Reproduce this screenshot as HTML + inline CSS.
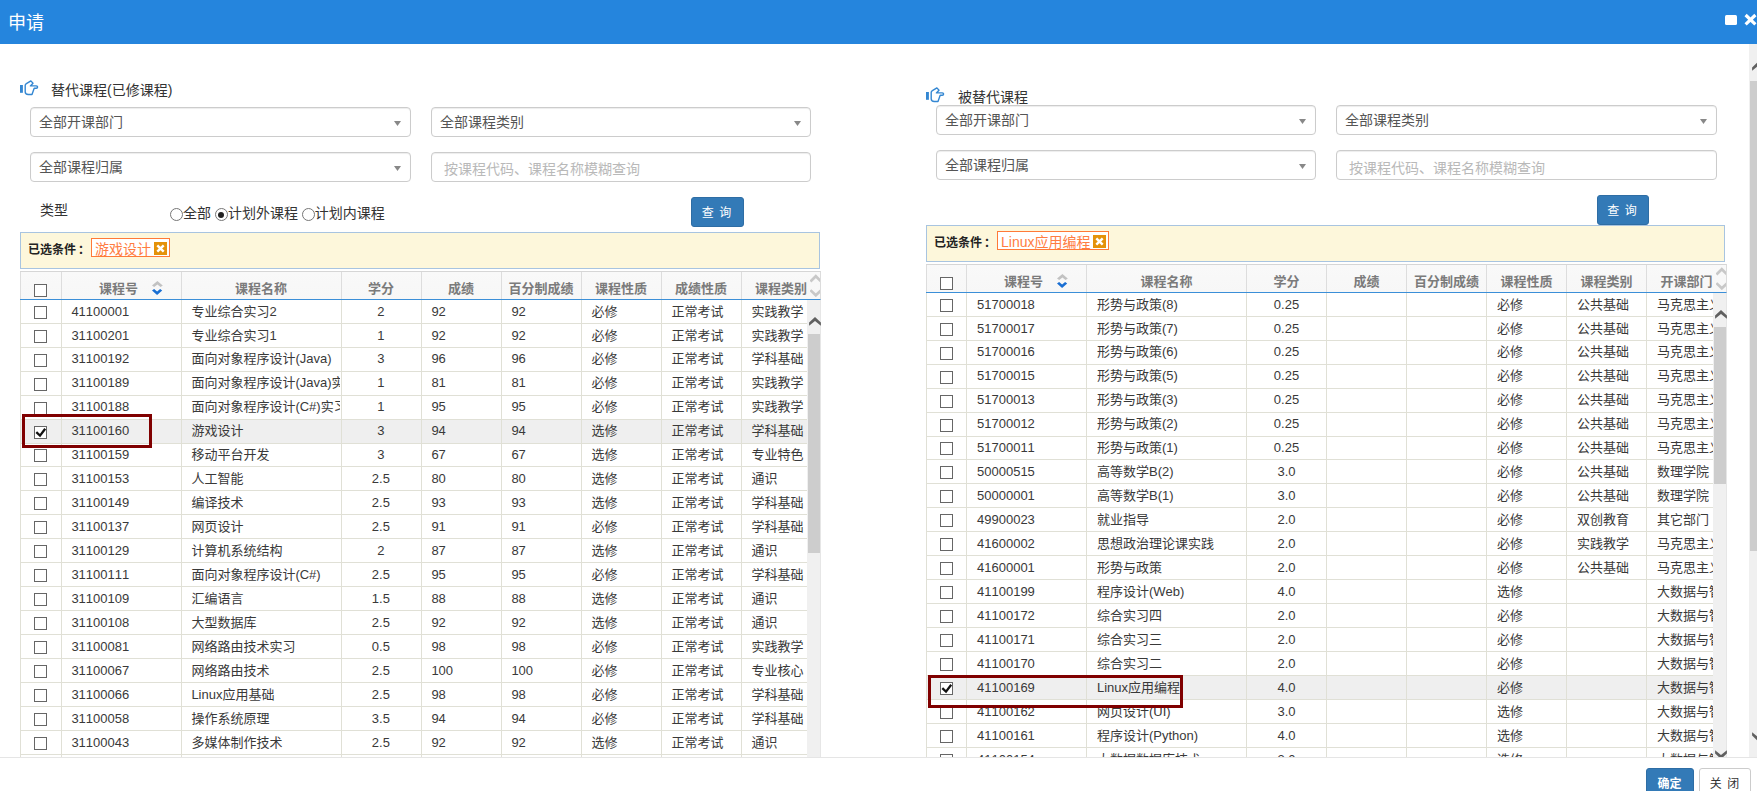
<!DOCTYPE html>
<html lang="zh-CN"><head><meta charset="utf-8"><title>申请</title>
<style>
*{box-sizing:border-box}
html,body{margin:0;padding:0}
body{width:1757px;height:791px;overflow:hidden;position:relative;background:#fff;
 font-family:"Liberation Sans","Noto Sans CJK SC",sans-serif;font-size:14px;color:#333;font-kerning:none}
.abs{position:absolute}
#titlebar{position:absolute;left:0;top:0;width:1757px;height:44px;background:#2585dd;color:#fff}
#titlebar h4{margin:0;position:absolute;left:8px;top:10px;font-size:18px;line-height:26px;font-weight:400}
#winmax{position:absolute;left:1725.4px;top:15px;width:11.2px;height:10px;background:#fff;border-radius:1.5px}
#winclose{position:absolute;left:1743px;top:12px;width:15px;height:15px}
.hand{position:absolute;width:19px;height:16px;overflow:visible}
.ptitle{position:absolute;font-size:14px;line-height:20px;color:#333;white-space:nowrap}
.sel{position:absolute;height:30px;border:1px solid #ccc;border-radius:4px;background:#fff;
 box-shadow:inset 0 1px 1px rgba(0,0,0,.075);color:#555;font-size:14px;line-height:28px;padding-left:8px;white-space:nowrap}
.sel .caret{position:absolute;right:9px;top:13px;width:7px;height:5px}
.inp{color:#b9b9b9;padding-left:12px;line-height:32px}
.inp.lo{line-height:34px}
.lbl{position:absolute;font-size:14px;line-height:20px;color:#333}
.radios{position:absolute;font-size:14px;line-height:20px;color:#333;white-space:nowrap}
.rd{display:inline-block;width:13px;height:13px;border:1px solid #767676;border-radius:50%;background:#fff;vertical-align:-3px;position:relative}
.rd.on::after{content:"";position:absolute;left:2.5px;top:2.5px;width:6px;height:6px;border-radius:50%;background:#222}
.btn{position:absolute;border-radius:3px;font-size:12px;text-align:center;white-space:nowrap}
.btn-primary{background:#337ab7;border:1px solid #2e6da4;color:#fff}
.btn-default{background:#fff;border:1px solid #ccc;color:#333}
.cond{position:absolute;height:37px;width:800px;background:#fdf7db;border:1px solid #a8c4e0}
.cond b{position:absolute;left:7px;top:8.5px;font-size:12px;line-height:16px;color:#222;font-weight:700;white-space:nowrap}
.tag{position:absolute;height:19px;border:1px solid #ff7a38;background:#fff;color:#ff7d42;font-size:14px;line-height:19px;padding-left:3px;white-space:nowrap}
.tag .tx{position:absolute;right:2px;top:3px;width:13px;height:13px}
.tag span{position:relative;top:1px}
.grid{position:absolute;overflow:hidden}
.ghdr{position:absolute;left:0;top:0;height:29px;border-top:1px solid #d6d6d6;border-bottom:1px solid #3b8fd8;border-right:1px solid #dcdcdc;
 background:linear-gradient(#f9f9f9,#f7f7f7);overflow:hidden}
.th{position:absolute;top:0;height:27px;line-height:33px;text-align:center;font-size:13px;font-weight:700;color:#7b7b7b;white-space:nowrap;overflow:hidden}
.sorttxt{position:relative;left:-3px}
.sico{position:absolute;left:90px;top:9px;width:11px;height:15px}
.hspin{position:absolute;right:0;width:10px;height:24px;top:0.5px}
.vh{position:absolute;top:0;width:1px;height:27px;background:#dddddd}
.gbody{position:absolute;left:0;overflow:hidden;background:#fff}
.row{position:absolute;left:0;width:805px;height:24px;border-bottom:1px solid #e0e0d6}
.row.hl{background:#efefef}
.td{position:absolute;top:-0.2px;height:23px;line-height:23px;font-size:13px;color:#393939;padding-left:10px;white-space:nowrap;overflow:hidden}
.td.c{text-align:center;padding-left:0}
.vb{position:absolute;top:0;width:1px;height:100%;background:#e0e0d6}
.cb{position:absolute;top:6px;width:13px;height:13px;border:1px solid #666;background:#fff}
.hcb{top:12px}
.cb .ck{position:absolute;left:-1px;top:-1px;width:13px;height:13px}
.mark{position:absolute;border:3px solid #800000}
.sbar{position:absolute;background:#f0f0f0;overflow:hidden}
.sbar .edge{position:absolute;top:0;width:1px;height:100%;background:#e6e6e6}
.sbar .thumb{position:absolute;background:#cdcdcd}
.sbar svg{position:absolute}
#footline{position:absolute;left:0;top:757px;width:1757px;height:1px;background:#e5e5e5}
#footer{position:absolute;left:0;top:758px;width:1757px;height:33px;background:#fff}
</style></head><body>

<div id="titlebar"><h4>申请</h4><span id="winmax"></span><svg id="winclose" viewBox="0 0 15 15"><path d="M2.6 3 L12.4 12.4 M12.4 3 L2.6 12.4" stroke="#fff" stroke-width="3.2" stroke-linecap="butt"/></svg></div>
<section id="left">
<svg class="hand" style="left:20px;top:80px" viewBox="0 0 19 16"><rect x="0" y="5" width="2.9" height="7.8" fill="#3487d2"/><path d="M10.9 0.9 L13 3.2 L10.4 5.9 H16.3 Q17.6 5.9 17.6 7.05 Q17.6 8.2 16.3 8.2 H14.2 L12 14.5 H8.2 Q5.2 14.5 5.2 11.8 V5.6 Q5.2 4.4 6.4 3.7 Z" fill="none" stroke="#3487d2" stroke-width="1.4" stroke-linejoin="round"/></svg>
<div class="ptitle" style="left:51px;top:80px">替代课程(已修课程)</div>
<div class="sel" style="left:30px;top:107px;width:381px"><span>全部开课部门</span><svg class="caret" viewBox="0 0 7 5"><path d="M0 0 H7 L3.5 5 Z" fill="#888"/></svg></div>
<div class="sel" style="left:431px;top:107px;width:380px"><span>全部课程类别</span><svg class="caret" viewBox="0 0 7 5"><path d="M0 0 H7 L3.5 5 Z" fill="#888"/></svg></div>
<div class="sel" style="left:30px;top:152px;width:381px"><span>全部课程归属</span><svg class="caret" viewBox="0 0 7 5"><path d="M0 0 H7 L3.5 5 Z" fill="#888"/></svg></div>
<div class="sel inp" style="left:431px;top:152px;width:380px"><span>按课程代码、课程名称模糊查询</span></div>
<div class="lbl" style="left:40px;top:200px">类型</div>
<div class="radios" style="left:170px;top:203px"><i class="rd"></i>全部 <i class="rd on"></i>计划外课程 <i class="rd"></i>计划内课程</div>
<div class="btn btn-primary" style="left:691px;top:197px;width:53px;height:30px;line-height:31px;word-spacing:2px;text-indent:-2px">查 询</div>
<div class="cond" style="left:20px;top:232px"><b>已选条件<span style="margin-left:2px">：</span></b></div>
<div class="tag" style="left:91px;top:238px;width:79px"><span>游戏设计</span><svg class="tx" viewBox="0 0 13 13"><rect width="13" height="13" fill="#e4920a"/><path d="M3.3 3.3 L9.7 9.7 M9.7 3.3 L3.3 9.7" stroke="#fff" stroke-width="2.4"/></svg></div>
<div class="grid" id="lgrid" style="left:20px;top:271px;width:802px;height:486px">
<div class="ghdr" style="width:801px">
<span class="cb hcb" style="left:14px"></span>
<div class="th" style="left:42px;width:119px"><span class="sorttxt">课程号</span><svg class="sico" viewBox="0 0 11 15"><polygon points="5.4,0 10.8,4.55 8.6,6 5.4,3.5 2.2,6 0,4.55" fill="#c2c2c2"/><polygon points="0,9.4 2.1,7.9 5.1,10.4 8.1,7.9 10.2,9.4 5.1,14.1" fill="#1a6fd3"/></svg></div>
<div class="th" style="left:161.4px;width:159px">课程名称</div>
<div class="th" style="left:321.4px;width:79px">学分</div>
<div class="th" style="left:401.4px;width:79px">成绩</div>
<div class="th" style="left:481.4px;width:79px">百分制成绩</div>
<div class="th" style="left:561.4px;width:79px">课程性质</div>
<div class="th" style="left:641.4px;width:79px">成绩性质</div>
<div class="th" style="left:721.4px;width:79px">课程类别</div>
<i class="vh" style="left:0px"></i>
<i class="vh" style="left:41px"></i>
<i class="vh" style="left:161px"></i>
<i class="vh" style="left:321px"></i>
<i class="vh" style="left:401px"></i>
<i class="vh" style="left:481px"></i>
<i class="vh" style="left:561px"></i>
<i class="vh" style="left:641px"></i>
<i class="vh" style="left:721px"></i>
<svg class="hspin" viewBox="0 0 10 24"><path d="M0.4 8.5 L5.8 3.2 L11 8.3" fill="none" stroke="#c8c8c8" stroke-width="2.7"/><path d="M0.4 17.1 L5.8 22.3 L11 17.3" fill="none" stroke="#c8c8c8" stroke-width="2.7"/></svg>
</div>
<div class="gbody" style="top:29px;width:787px;height:457px">
<div class="row" style="top:-0.23px">
<span class="cb" style="left:14px"></span>
<div class="td" style="left:41.4px;width:119px">41100001</div>
<div class="td" style="left:161.4px;width:159px">专业综合实习2</div>
<div class="td c" style="left:321.4px;width:79px">2</div>
<div class="td" style="left:401.4px;width:79px">92</div>
<div class="td" style="left:481.4px;width:79px">92</div>
<div class="td" style="left:561.4px;width:79px">必修</div>
<div class="td" style="left:641.4px;width:79px">正常考试</div>
<div class="td" style="left:721.4px;width:79px">实践教学</div>
</div>
<div class="row" style="top:23.72px">
<span class="cb" style="left:14px"></span>
<div class="td" style="left:41.4px;width:119px">31100201</div>
<div class="td" style="left:161.4px;width:159px">专业综合实习1</div>
<div class="td c" style="left:321.4px;width:79px">1</div>
<div class="td" style="left:401.4px;width:79px">92</div>
<div class="td" style="left:481.4px;width:79px">92</div>
<div class="td" style="left:561.4px;width:79px">必修</div>
<div class="td" style="left:641.4px;width:79px">正常考试</div>
<div class="td" style="left:721.4px;width:79px">实践教学</div>
</div>
<div class="row" style="top:47.67px">
<span class="cb" style="left:14px"></span>
<div class="td" style="left:41.4px;width:119px">31100192</div>
<div class="td" style="left:161.4px;width:159px">面向对象程序设计(Java)</div>
<div class="td c" style="left:321.4px;width:79px">3</div>
<div class="td" style="left:401.4px;width:79px">96</div>
<div class="td" style="left:481.4px;width:79px">96</div>
<div class="td" style="left:561.4px;width:79px">必修</div>
<div class="td" style="left:641.4px;width:79px">正常考试</div>
<div class="td" style="left:721.4px;width:79px">学科基础</div>
</div>
<div class="row" style="top:71.62px">
<span class="cb" style="left:14px"></span>
<div class="td" style="left:41.4px;width:119px">31100189</div>
<div class="td" style="left:161.4px;width:159px">面向对象程序设计(Java)实习</div>
<div class="td c" style="left:321.4px;width:79px">1</div>
<div class="td" style="left:401.4px;width:79px">81</div>
<div class="td" style="left:481.4px;width:79px">81</div>
<div class="td" style="left:561.4px;width:79px">必修</div>
<div class="td" style="left:641.4px;width:79px">正常考试</div>
<div class="td" style="left:721.4px;width:79px">实践教学</div>
</div>
<div class="row" style="top:95.57px">
<span class="cb" style="left:14px"></span>
<div class="td" style="left:41.4px;width:119px">31100188</div>
<div class="td" style="left:161.4px;width:159px">面向对象程序设计(C#)实习</div>
<div class="td c" style="left:321.4px;width:79px">1</div>
<div class="td" style="left:401.4px;width:79px">95</div>
<div class="td" style="left:481.4px;width:79px">95</div>
<div class="td" style="left:561.4px;width:79px">必修</div>
<div class="td" style="left:641.4px;width:79px">正常考试</div>
<div class="td" style="left:721.4px;width:79px">实践教学</div>
</div>
<div class="row hl" style="top:119.52px">
<span class="cb on" style="left:14px"><svg class="ck" viewBox="0 0 13 13"><path d="M2.3 6.2 L6 9.6 L11.2 2.7" fill="none" stroke="#111" stroke-width="2.3"/></svg></span>
<div class="td" style="left:41.4px;width:119px">31100160</div>
<div class="td" style="left:161.4px;width:159px">游戏设计</div>
<div class="td c" style="left:321.4px;width:79px">3</div>
<div class="td" style="left:401.4px;width:79px">94</div>
<div class="td" style="left:481.4px;width:79px">94</div>
<div class="td" style="left:561.4px;width:79px">选修</div>
<div class="td" style="left:641.4px;width:79px">正常考试</div>
<div class="td" style="left:721.4px;width:79px">学科基础</div>
</div>
<div class="row" style="top:143.47px">
<span class="cb" style="left:14px"></span>
<div class="td" style="left:41.4px;width:119px">31100159</div>
<div class="td" style="left:161.4px;width:159px">移动平台开发</div>
<div class="td c" style="left:321.4px;width:79px">3</div>
<div class="td" style="left:401.4px;width:79px">67</div>
<div class="td" style="left:481.4px;width:79px">67</div>
<div class="td" style="left:561.4px;width:79px">选修</div>
<div class="td" style="left:641.4px;width:79px">正常考试</div>
<div class="td" style="left:721.4px;width:79px">专业特色</div>
</div>
<div class="row" style="top:167.42px">
<span class="cb" style="left:14px"></span>
<div class="td" style="left:41.4px;width:119px">31100153</div>
<div class="td" style="left:161.4px;width:159px">人工智能</div>
<div class="td c" style="left:321.4px;width:79px">2.5</div>
<div class="td" style="left:401.4px;width:79px">80</div>
<div class="td" style="left:481.4px;width:79px">80</div>
<div class="td" style="left:561.4px;width:79px">选修</div>
<div class="td" style="left:641.4px;width:79px">正常考试</div>
<div class="td" style="left:721.4px;width:79px">通识</div>
</div>
<div class="row" style="top:191.37px">
<span class="cb" style="left:14px"></span>
<div class="td" style="left:41.4px;width:119px">31100149</div>
<div class="td" style="left:161.4px;width:159px">编译技术</div>
<div class="td c" style="left:321.4px;width:79px">2.5</div>
<div class="td" style="left:401.4px;width:79px">93</div>
<div class="td" style="left:481.4px;width:79px">93</div>
<div class="td" style="left:561.4px;width:79px">选修</div>
<div class="td" style="left:641.4px;width:79px">正常考试</div>
<div class="td" style="left:721.4px;width:79px">学科基础</div>
</div>
<div class="row" style="top:215.32px">
<span class="cb" style="left:14px"></span>
<div class="td" style="left:41.4px;width:119px">31100137</div>
<div class="td" style="left:161.4px;width:159px">网页设计</div>
<div class="td c" style="left:321.4px;width:79px">2.5</div>
<div class="td" style="left:401.4px;width:79px">91</div>
<div class="td" style="left:481.4px;width:79px">91</div>
<div class="td" style="left:561.4px;width:79px">必修</div>
<div class="td" style="left:641.4px;width:79px">正常考试</div>
<div class="td" style="left:721.4px;width:79px">学科基础</div>
</div>
<div class="row" style="top:239.27px">
<span class="cb" style="left:14px"></span>
<div class="td" style="left:41.4px;width:119px">31100129</div>
<div class="td" style="left:161.4px;width:159px">计算机系统结构</div>
<div class="td c" style="left:321.4px;width:79px">2</div>
<div class="td" style="left:401.4px;width:79px">87</div>
<div class="td" style="left:481.4px;width:79px">87</div>
<div class="td" style="left:561.4px;width:79px">选修</div>
<div class="td" style="left:641.4px;width:79px">正常考试</div>
<div class="td" style="left:721.4px;width:79px">通识</div>
</div>
<div class="row" style="top:263.22px">
<span class="cb" style="left:14px"></span>
<div class="td" style="left:41.4px;width:119px">31100111</div>
<div class="td" style="left:161.4px;width:159px">面向对象程序设计(C#)</div>
<div class="td c" style="left:321.4px;width:79px">2.5</div>
<div class="td" style="left:401.4px;width:79px">95</div>
<div class="td" style="left:481.4px;width:79px">95</div>
<div class="td" style="left:561.4px;width:79px">必修</div>
<div class="td" style="left:641.4px;width:79px">正常考试</div>
<div class="td" style="left:721.4px;width:79px">学科基础</div>
</div>
<div class="row" style="top:287.17px">
<span class="cb" style="left:14px"></span>
<div class="td" style="left:41.4px;width:119px">31100109</div>
<div class="td" style="left:161.4px;width:159px">汇编语言</div>
<div class="td c" style="left:321.4px;width:79px">1.5</div>
<div class="td" style="left:401.4px;width:79px">88</div>
<div class="td" style="left:481.4px;width:79px">88</div>
<div class="td" style="left:561.4px;width:79px">选修</div>
<div class="td" style="left:641.4px;width:79px">正常考试</div>
<div class="td" style="left:721.4px;width:79px">通识</div>
</div>
<div class="row" style="top:311.12px">
<span class="cb" style="left:14px"></span>
<div class="td" style="left:41.4px;width:119px">31100108</div>
<div class="td" style="left:161.4px;width:159px">大型数据库</div>
<div class="td c" style="left:321.4px;width:79px">2.5</div>
<div class="td" style="left:401.4px;width:79px">92</div>
<div class="td" style="left:481.4px;width:79px">92</div>
<div class="td" style="left:561.4px;width:79px">选修</div>
<div class="td" style="left:641.4px;width:79px">正常考试</div>
<div class="td" style="left:721.4px;width:79px">通识</div>
</div>
<div class="row" style="top:335.07px">
<span class="cb" style="left:14px"></span>
<div class="td" style="left:41.4px;width:119px">31100081</div>
<div class="td" style="left:161.4px;width:159px">网络路由技术实习</div>
<div class="td c" style="left:321.4px;width:79px">0.5</div>
<div class="td" style="left:401.4px;width:79px">98</div>
<div class="td" style="left:481.4px;width:79px">98</div>
<div class="td" style="left:561.4px;width:79px">必修</div>
<div class="td" style="left:641.4px;width:79px">正常考试</div>
<div class="td" style="left:721.4px;width:79px">实践教学</div>
</div>
<div class="row" style="top:359.02px">
<span class="cb" style="left:14px"></span>
<div class="td" style="left:41.4px;width:119px">31100067</div>
<div class="td" style="left:161.4px;width:159px">网络路由技术</div>
<div class="td c" style="left:321.4px;width:79px">2.5</div>
<div class="td" style="left:401.4px;width:79px">100</div>
<div class="td" style="left:481.4px;width:79px">100</div>
<div class="td" style="left:561.4px;width:79px">必修</div>
<div class="td" style="left:641.4px;width:79px">正常考试</div>
<div class="td" style="left:721.4px;width:79px">专业核心</div>
</div>
<div class="row" style="top:382.97px">
<span class="cb" style="left:14px"></span>
<div class="td" style="left:41.4px;width:119px">31100066</div>
<div class="td" style="left:161.4px;width:159px">Linux应用基础</div>
<div class="td c" style="left:321.4px;width:79px">2.5</div>
<div class="td" style="left:401.4px;width:79px">98</div>
<div class="td" style="left:481.4px;width:79px">98</div>
<div class="td" style="left:561.4px;width:79px">必修</div>
<div class="td" style="left:641.4px;width:79px">正常考试</div>
<div class="td" style="left:721.4px;width:79px">学科基础</div>
</div>
<div class="row" style="top:406.92px">
<span class="cb" style="left:14px"></span>
<div class="td" style="left:41.4px;width:119px">31100058</div>
<div class="td" style="left:161.4px;width:159px">操作系统原理</div>
<div class="td c" style="left:321.4px;width:79px">3.5</div>
<div class="td" style="left:401.4px;width:79px">94</div>
<div class="td" style="left:481.4px;width:79px">94</div>
<div class="td" style="left:561.4px;width:79px">必修</div>
<div class="td" style="left:641.4px;width:79px">正常考试</div>
<div class="td" style="left:721.4px;width:79px">学科基础</div>
</div>
<div class="row" style="top:430.87px">
<span class="cb" style="left:14px"></span>
<div class="td" style="left:41.4px;width:119px">31100043</div>
<div class="td" style="left:161.4px;width:159px">多媒体制作技术</div>
<div class="td c" style="left:321.4px;width:79px">2.5</div>
<div class="td" style="left:401.4px;width:79px">92</div>
<div class="td" style="left:481.4px;width:79px">92</div>
<div class="td" style="left:561.4px;width:79px">选修</div>
<div class="td" style="left:641.4px;width:79px">正常考试</div>
<div class="td" style="left:721.4px;width:79px">通识</div>
</div>
<div class="row" style="top:454.82px">
<span class="cb" style="left:14px"></span>
<div class="td" style="left:41.4px;width:119px">31100042</div>
<div class="td" style="left:161.4px;width:159px">计算机网络</div>
<div class="td c" style="left:321.4px;width:79px">3</div>
<div class="td" style="left:401.4px;width:79px">90</div>
<div class="td" style="left:481.4px;width:79px">90</div>
<div class="td" style="left:561.4px;width:79px">必修</div>
<div class="td" style="left:641.4px;width:79px">正常考试</div>
<div class="td" style="left:721.4px;width:79px">学科基础</div>
</div>
<i class="vb" style="left:0px"></i>
<i class="vb" style="left:41px"></i>
<i class="vb" style="left:161px"></i>
<i class="vb" style="left:321px"></i>
<i class="vb" style="left:401px"></i>
<i class="vb" style="left:481px"></i>
<i class="vb" style="left:561px"></i>
<i class="vb" style="left:641px"></i>
<i class="vb" style="left:721px"></i>
</div>
</div>
<div class="sbar" style="left:807px;top:300px;width:14px;height:457px"><i class="edge" style="left:13px"></i><svg style="left:0px;top:0px;width:16px;height:30px" viewBox="0 0 16 30"><polygon points="8,16.9 2.1,22.6 2.1,25.8 8,21 13.9,25.8 13.9,22.6" fill="#606060"/></svg><div class="thumb" style="left:1px;top:34px;width:12px;height:219px"></div></div>
<div class="mark" style="left:22px;top:414px;width:130px;height:34px"></div>
</section>
<section id="right">
<svg class="hand" style="left:926px;top:87px" viewBox="0 0 19 16"><rect x="0" y="5" width="2.9" height="7.8" fill="#3487d2"/><path d="M10.9 0.9 L13 3.2 L10.4 5.9 H16.3 Q17.6 5.9 17.6 7.05 Q17.6 8.2 16.3 8.2 H14.2 L12 14.5 H8.2 Q5.2 14.5 5.2 11.8 V5.6 Q5.2 4.4 6.4 3.7 Z" fill="none" stroke="#3487d2" stroke-width="1.4" stroke-linejoin="round"/></svg>
<div class="ptitle" style="left:958px;top:87px">被替代课程</div>
<div class="sel" style="left:936px;top:105px;width:380px"><span>全部开课部门</span><svg class="caret" viewBox="0 0 7 5"><path d="M0 0 H7 L3.5 5 Z" fill="#888"/></svg></div>
<div class="sel" style="left:1336px;top:105px;width:381px"><span>全部课程类别</span><svg class="caret" viewBox="0 0 7 5"><path d="M0 0 H7 L3.5 5 Z" fill="#888"/></svg></div>
<div class="sel" style="left:936px;top:150px;width:380px"><span>全部课程归属</span><svg class="caret" viewBox="0 0 7 5"><path d="M0 0 H7 L3.5 5 Z" fill="#888"/></svg></div>
<div class="sel inp lo" style="left:1336px;top:150px;width:381px"><span>按课程代码、课程名称模糊查询</span></div>
<div class="btn btn-primary" style="left:1597px;top:195px;width:52px;height:30px;line-height:31px;word-spacing:2px;text-indent:-2px">查 询</div>
<div class="cond" style="left:926px;top:225px;width:799px"><b>已选条件<span style="margin-left:2px">：</span></b></div>
<div class="tag" style="left:997px;top:231px;width:112px"><span>Linux应用编程</span><svg class="tx" viewBox="0 0 13 13"><rect width="13" height="13" fill="#e4920a"/><path d="M3.3 3.3 L9.7 9.7 M9.7 3.3 L3.3 9.7" stroke="#fff" stroke-width="2.4"/></svg></div>
<div class="grid" id="rgrid" style="left:926px;top:264px;width:802px;height:493px">
<div class="ghdr" style="width:801px">
<span class="cb hcb" style="left:14px"></span>
<div class="th" style="left:41px;width:119px"><span class="sorttxt">课程号</span><svg class="sico" viewBox="0 0 11 15"><polygon points="5.4,0 10.8,4.55 8.6,6 5.4,3.5 2.2,6 0,4.55" fill="#c2c2c2"/><polygon points="0,9.4 2.1,7.9 5.1,10.4 8.1,7.9 10.2,9.4 5.1,14.1" fill="#1a6fd3"/></svg></div>
<div class="th" style="left:161px;width:159px">课程名称</div>
<div class="th" style="left:321px;width:79px">学分</div>
<div class="th" style="left:401px;width:79px">成绩</div>
<div class="th" style="left:481px;width:79px">百分制成绩</div>
<div class="th" style="left:561px;width:79px">课程性质</div>
<div class="th" style="left:641px;width:79px">课程类别</div>
<div class="th" style="left:721px;width:79px">开课部门</div>
<i class="vh" style="left:0px"></i>
<i class="vh" style="left:40px"></i>
<i class="vh" style="left:160px"></i>
<i class="vh" style="left:320px"></i>
<i class="vh" style="left:400px"></i>
<i class="vh" style="left:480px"></i>
<i class="vh" style="left:560px"></i>
<i class="vh" style="left:640px"></i>
<i class="vh" style="left:720px"></i>
<svg class="hspin" viewBox="0 0 10 24"><path d="M0.4 8.5 L5.8 3.2 L11 8.3" fill="none" stroke="#c8c8c8" stroke-width="2.7"/><path d="M0.4 17.1 L5.8 22.3 L11 17.3" fill="none" stroke="#c8c8c8" stroke-width="2.7"/></svg>
</div>
<div class="gbody" style="top:29px;width:787px;height:464px">
<div class="row" style="top:-0.23px">
<span class="cb" style="left:14px"></span>
<div class="td" style="left:41px;width:119px">51700018</div>
<div class="td" style="left:161px;width:159px">形势与政策(8)</div>
<div class="td c" style="left:321px;width:79px">0.25</div>
<div class="td" style="left:401px;width:79px"></div>
<div class="td" style="left:481px;width:79px"></div>
<div class="td" style="left:561px;width:79px">必修</div>
<div class="td" style="left:641px;width:79px">公共基础</div>
<div class="td" style="left:721px;width:79px">马克思主义学院</div>
</div>
<div class="row" style="top:23.72px">
<span class="cb" style="left:14px"></span>
<div class="td" style="left:41px;width:119px">51700017</div>
<div class="td" style="left:161px;width:159px">形势与政策(7)</div>
<div class="td c" style="left:321px;width:79px">0.25</div>
<div class="td" style="left:401px;width:79px"></div>
<div class="td" style="left:481px;width:79px"></div>
<div class="td" style="left:561px;width:79px">必修</div>
<div class="td" style="left:641px;width:79px">公共基础</div>
<div class="td" style="left:721px;width:79px">马克思主义学院</div>
</div>
<div class="row" style="top:47.67px">
<span class="cb" style="left:14px"></span>
<div class="td" style="left:41px;width:119px">51700016</div>
<div class="td" style="left:161px;width:159px">形势与政策(6)</div>
<div class="td c" style="left:321px;width:79px">0.25</div>
<div class="td" style="left:401px;width:79px"></div>
<div class="td" style="left:481px;width:79px"></div>
<div class="td" style="left:561px;width:79px">必修</div>
<div class="td" style="left:641px;width:79px">公共基础</div>
<div class="td" style="left:721px;width:79px">马克思主义学院</div>
</div>
<div class="row" style="top:71.62px">
<span class="cb" style="left:14px"></span>
<div class="td" style="left:41px;width:119px">51700015</div>
<div class="td" style="left:161px;width:159px">形势与政策(5)</div>
<div class="td c" style="left:321px;width:79px">0.25</div>
<div class="td" style="left:401px;width:79px"></div>
<div class="td" style="left:481px;width:79px"></div>
<div class="td" style="left:561px;width:79px">必修</div>
<div class="td" style="left:641px;width:79px">公共基础</div>
<div class="td" style="left:721px;width:79px">马克思主义学院</div>
</div>
<div class="row" style="top:95.57px">
<span class="cb" style="left:14px"></span>
<div class="td" style="left:41px;width:119px">51700013</div>
<div class="td" style="left:161px;width:159px">形势与政策(3)</div>
<div class="td c" style="left:321px;width:79px">0.25</div>
<div class="td" style="left:401px;width:79px"></div>
<div class="td" style="left:481px;width:79px"></div>
<div class="td" style="left:561px;width:79px">必修</div>
<div class="td" style="left:641px;width:79px">公共基础</div>
<div class="td" style="left:721px;width:79px">马克思主义学院</div>
</div>
<div class="row" style="top:119.52px">
<span class="cb" style="left:14px"></span>
<div class="td" style="left:41px;width:119px">51700012</div>
<div class="td" style="left:161px;width:159px">形势与政策(2)</div>
<div class="td c" style="left:321px;width:79px">0.25</div>
<div class="td" style="left:401px;width:79px"></div>
<div class="td" style="left:481px;width:79px"></div>
<div class="td" style="left:561px;width:79px">必修</div>
<div class="td" style="left:641px;width:79px">公共基础</div>
<div class="td" style="left:721px;width:79px">马克思主义学院</div>
</div>
<div class="row" style="top:143.47px">
<span class="cb" style="left:14px"></span>
<div class="td" style="left:41px;width:119px">51700011</div>
<div class="td" style="left:161px;width:159px">形势与政策(1)</div>
<div class="td c" style="left:321px;width:79px">0.25</div>
<div class="td" style="left:401px;width:79px"></div>
<div class="td" style="left:481px;width:79px"></div>
<div class="td" style="left:561px;width:79px">必修</div>
<div class="td" style="left:641px;width:79px">公共基础</div>
<div class="td" style="left:721px;width:79px">马克思主义学院</div>
</div>
<div class="row" style="top:167.42px">
<span class="cb" style="left:14px"></span>
<div class="td" style="left:41px;width:119px">50000515</div>
<div class="td" style="left:161px;width:159px">高等数学B(2)</div>
<div class="td c" style="left:321px;width:79px">3.0</div>
<div class="td" style="left:401px;width:79px"></div>
<div class="td" style="left:481px;width:79px"></div>
<div class="td" style="left:561px;width:79px">必修</div>
<div class="td" style="left:641px;width:79px">公共基础</div>
<div class="td" style="left:721px;width:79px">数理学院</div>
</div>
<div class="row" style="top:191.37px">
<span class="cb" style="left:14px"></span>
<div class="td" style="left:41px;width:119px">50000001</div>
<div class="td" style="left:161px;width:159px">高等数学B(1)</div>
<div class="td c" style="left:321px;width:79px">3.0</div>
<div class="td" style="left:401px;width:79px"></div>
<div class="td" style="left:481px;width:79px"></div>
<div class="td" style="left:561px;width:79px">必修</div>
<div class="td" style="left:641px;width:79px">公共基础</div>
<div class="td" style="left:721px;width:79px">数理学院</div>
</div>
<div class="row" style="top:215.32px">
<span class="cb" style="left:14px"></span>
<div class="td" style="left:41px;width:119px">49900023</div>
<div class="td" style="left:161px;width:159px">就业指导</div>
<div class="td c" style="left:321px;width:79px">2.0</div>
<div class="td" style="left:401px;width:79px"></div>
<div class="td" style="left:481px;width:79px"></div>
<div class="td" style="left:561px;width:79px">必修</div>
<div class="td" style="left:641px;width:79px">双创教育</div>
<div class="td" style="left:721px;width:79px">其它部门</div>
</div>
<div class="row" style="top:239.27px">
<span class="cb" style="left:14px"></span>
<div class="td" style="left:41px;width:119px">41600002</div>
<div class="td" style="left:161px;width:159px">思想政治理论课实践</div>
<div class="td c" style="left:321px;width:79px">2.0</div>
<div class="td" style="left:401px;width:79px"></div>
<div class="td" style="left:481px;width:79px"></div>
<div class="td" style="left:561px;width:79px">必修</div>
<div class="td" style="left:641px;width:79px">实践教学</div>
<div class="td" style="left:721px;width:79px">马克思主义学院</div>
</div>
<div class="row" style="top:263.22px">
<span class="cb" style="left:14px"></span>
<div class="td" style="left:41px;width:119px">41600001</div>
<div class="td" style="left:161px;width:159px">形势与政策</div>
<div class="td c" style="left:321px;width:79px">2.0</div>
<div class="td" style="left:401px;width:79px"></div>
<div class="td" style="left:481px;width:79px"></div>
<div class="td" style="left:561px;width:79px">必修</div>
<div class="td" style="left:641px;width:79px">公共基础</div>
<div class="td" style="left:721px;width:79px">马克思主义学院</div>
</div>
<div class="row" style="top:287.17px">
<span class="cb" style="left:14px"></span>
<div class="td" style="left:41px;width:119px">41100199</div>
<div class="td" style="left:161px;width:159px">程序设计(Web)</div>
<div class="td c" style="left:321px;width:79px">4.0</div>
<div class="td" style="left:401px;width:79px"></div>
<div class="td" style="left:481px;width:79px"></div>
<div class="td" style="left:561px;width:79px">选修</div>
<div class="td" style="left:641px;width:79px"></div>
<div class="td" style="left:721px;width:79px">大数据与智能工程学院</div>
</div>
<div class="row" style="top:311.12px">
<span class="cb" style="left:14px"></span>
<div class="td" style="left:41px;width:119px">41100172</div>
<div class="td" style="left:161px;width:159px">综合实习四</div>
<div class="td c" style="left:321px;width:79px">2.0</div>
<div class="td" style="left:401px;width:79px"></div>
<div class="td" style="left:481px;width:79px"></div>
<div class="td" style="left:561px;width:79px">必修</div>
<div class="td" style="left:641px;width:79px"></div>
<div class="td" style="left:721px;width:79px">大数据与智能工程学院</div>
</div>
<div class="row" style="top:335.07px">
<span class="cb" style="left:14px"></span>
<div class="td" style="left:41px;width:119px">41100171</div>
<div class="td" style="left:161px;width:159px">综合实习三</div>
<div class="td c" style="left:321px;width:79px">2.0</div>
<div class="td" style="left:401px;width:79px"></div>
<div class="td" style="left:481px;width:79px"></div>
<div class="td" style="left:561px;width:79px">必修</div>
<div class="td" style="left:641px;width:79px"></div>
<div class="td" style="left:721px;width:79px">大数据与智能工程学院</div>
</div>
<div class="row" style="top:359.02px">
<span class="cb" style="left:14px"></span>
<div class="td" style="left:41px;width:119px">41100170</div>
<div class="td" style="left:161px;width:159px">综合实习二</div>
<div class="td c" style="left:321px;width:79px">2.0</div>
<div class="td" style="left:401px;width:79px"></div>
<div class="td" style="left:481px;width:79px"></div>
<div class="td" style="left:561px;width:79px">必修</div>
<div class="td" style="left:641px;width:79px"></div>
<div class="td" style="left:721px;width:79px">大数据与智能工程学院</div>
</div>
<div class="row hl" style="top:382.97px">
<span class="cb on" style="left:14px"><svg class="ck" viewBox="0 0 13 13"><path d="M2.3 6.2 L6 9.6 L11.2 2.7" fill="none" stroke="#111" stroke-width="2.3"/></svg></span>
<div class="td" style="left:41px;width:119px">41100169</div>
<div class="td" style="left:161px;width:159px">Linux应用编程</div>
<div class="td c" style="left:321px;width:79px">4.0</div>
<div class="td" style="left:401px;width:79px"></div>
<div class="td" style="left:481px;width:79px"></div>
<div class="td" style="left:561px;width:79px">必修</div>
<div class="td" style="left:641px;width:79px"></div>
<div class="td" style="left:721px;width:79px">大数据与智能工程学院</div>
</div>
<div class="row" style="top:406.92px">
<span class="cb" style="left:14px"></span>
<div class="td" style="left:41px;width:119px">41100162</div>
<div class="td" style="left:161px;width:159px">网页设计(UI)</div>
<div class="td c" style="left:321px;width:79px">3.0</div>
<div class="td" style="left:401px;width:79px"></div>
<div class="td" style="left:481px;width:79px"></div>
<div class="td" style="left:561px;width:79px">选修</div>
<div class="td" style="left:641px;width:79px"></div>
<div class="td" style="left:721px;width:79px">大数据与智能工程学院</div>
</div>
<div class="row" style="top:430.87px">
<span class="cb" style="left:14px"></span>
<div class="td" style="left:41px;width:119px">41100161</div>
<div class="td" style="left:161px;width:159px">程序设计(Python)</div>
<div class="td c" style="left:321px;width:79px">4.0</div>
<div class="td" style="left:401px;width:79px"></div>
<div class="td" style="left:481px;width:79px"></div>
<div class="td" style="left:561px;width:79px">选修</div>
<div class="td" style="left:641px;width:79px"></div>
<div class="td" style="left:721px;width:79px">大数据与智能工程学院</div>
</div>
<div class="row" style="top:454.82px">
<span class="cb" style="left:14px"></span>
<div class="td" style="left:41px;width:119px">41100154</div>
<div class="td" style="left:161px;width:159px">大数据数据库技术</div>
<div class="td c" style="left:321px;width:79px">3.0</div>
<div class="td" style="left:401px;width:79px"></div>
<div class="td" style="left:481px;width:79px"></div>
<div class="td" style="left:561px;width:79px">选修</div>
<div class="td" style="left:641px;width:79px"></div>
<div class="td" style="left:721px;width:79px">大数据与智能工程学院</div>
</div>
<i class="vb" style="left:0px"></i>
<i class="vb" style="left:40px"></i>
<i class="vb" style="left:160px"></i>
<i class="vb" style="left:320px"></i>
<i class="vb" style="left:400px"></i>
<i class="vb" style="left:480px"></i>
<i class="vb" style="left:560px"></i>
<i class="vb" style="left:640px"></i>
<i class="vb" style="left:720px"></i>
</div>
</div>
<div class="sbar" style="left:1713px;top:293px;width:14px;height:464px"><i class="edge" style="left:13px"></i><svg style="left:0px;top:0px;width:16px;height:30px" viewBox="0 0 16 30"><polygon points="8,16.9 2.1,22.6 2.1,25.8 8,21 13.9,25.8 13.9,22.6" fill="#606060"/></svg><div class="thumb" style="left:1px;top:34px;width:12px;height:157px"></div><svg style="left:0px;top:453px;width:16px;height:30px" viewBox="0 0 16 30"><polygon points="8,13.1 2.1,7.4 2.1,4.2 8,9 13.9,4.2 13.9,7.4" fill="#606060"/></svg></div>
<div class="mark" style="left:928px;top:675px;width:255px;height:33px"></div>
</section>
<div class="sbar" style="left:1749px;top:44px;width:8px;height:713px"><svg style="left:0.8px;top:1px;width:16px;height:30px" viewBox="0 0 16 30"><polygon points="8,16.9 2.1,22.6 2.1,25.8 8,21 13.9,25.8 13.9,22.6" fill="#606060"/></svg><div class="thumb" style="left:1px;top:37px;width:7px;height:470px"></div><svg style="left:0.8px;top:683.5px;width:16px;height:30px" viewBox="0 0 16 30"><polygon points="8,13.1 2.1,7.4 2.1,4.2 8,9 13.9,4.2 13.9,7.4" fill="#606060"/></svg></div>
<div id="footline"></div><div id="footer"><div class="btn btn-primary" style="left:1646px;top:10px;width:48px;height:30px;line-height:31px;font-weight:700;text-indent:-1px">确定</div><div class="btn btn-default" style="left:1699px;top:10px;width:52px;height:30px;line-height:31px;word-spacing:2px;text-indent:-1px">关 闭</div></div>
</body></html>
